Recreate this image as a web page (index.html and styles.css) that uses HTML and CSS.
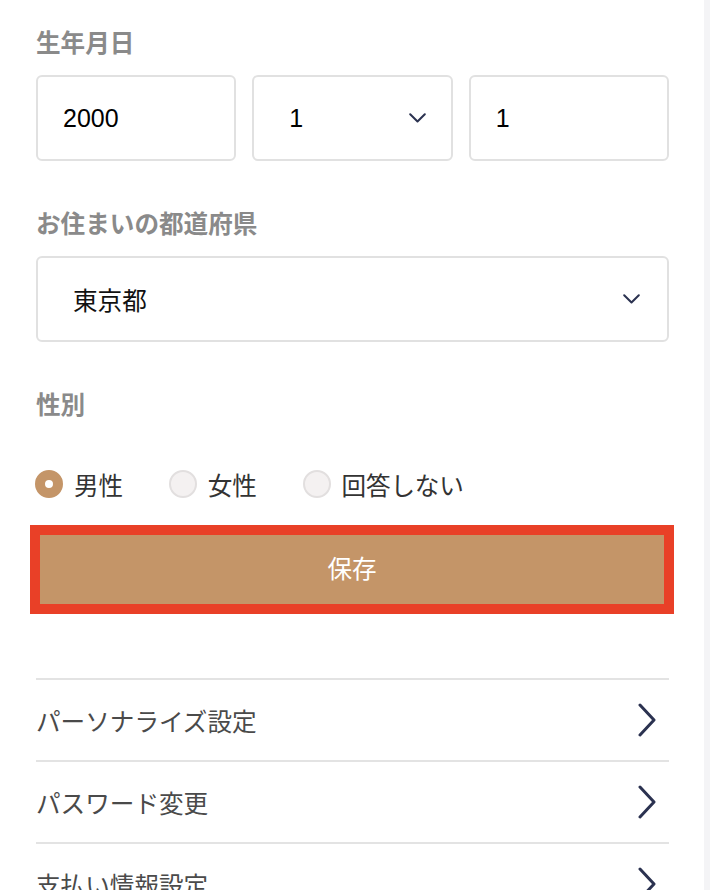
FILE: index.html
```html
<!DOCTYPE html>
<html lang="ja">
<head>
<meta charset="utf-8">
<title>プロフィール設定</title>
<link rel="stylesheet" href="styles.css">
</head>
<body>
<div class="page">
  <main class="content">
    <section class="group first">
      <div class="label">生年月日</div>
      <div class="date-row">
        <div class="field field-input"><span class="num">2000</span></div>
        <div class="field field-select month">
          <span class="num">1</span>
          <svg class="caret" width="17" height="10" viewBox="0 0 17 10"><path d="M1.2 1.2 L8.5 8.5 L15.8 1.2" fill="none" stroke="#2b3250" stroke-width="2" stroke-linecap="round" stroke-linejoin="round"/></svg>
        </div>
        <div class="field field-input"><span class="num">1</span></div>
      </div>
    </section>

    <section class="group">
      <div class="label">お住まいの都道府県</div>
      <div class="field field-select pref">
        <span class="val">東京都</span>
        <svg class="caret" width="17" height="10" viewBox="0 0 17 10"><path d="M1.2 1.2 L8.5 8.5 L15.8 1.2" fill="none" stroke="#2b3250" stroke-width="2" stroke-linecap="round" stroke-linejoin="round"/></svg>
      </div>
    </section>

    <section class="group">
      <div class="label">性別</div>
      <div class="radios">
        <div class="radio"><span class="dot checked"></span><span class="rtext">男性</span></div>
        <div class="radio"><span class="dot"></span><span class="rtext">女性</span></div>
        <div class="radio"><span class="dot"></span><span class="rtext">回答しない</span></div>
      </div>
    </section>

    <button class="save" type="button">保存</button>

    <ul class="menu">
      <li class="item"><span>パーソナライズ設定</span><svg class="chev" width="18" height="34" viewBox="0 0 18 34"><path d="M2 2 L16 17 L2 32" fill="none" stroke="#2b3250" stroke-width="3" stroke-linecap="round" stroke-linejoin="round"/></svg></li>
      <li class="item"><span>パスワード変更</span><svg class="chev" width="18" height="34" viewBox="0 0 18 34"><path d="M2 2 L16 17 L2 32" fill="none" stroke="#2b3250" stroke-width="3" stroke-linecap="round" stroke-linejoin="round"/></svg></li>
      <li class="item"><span>支払い情報設定</span><svg class="chev" width="18" height="34" viewBox="0 0 18 34"><path d="M2 2 L16 17 L2 32" fill="none" stroke="#2b3250" stroke-width="3" stroke-linecap="round" stroke-linejoin="round"/></svg></li>
    </ul>
  </main>
  <div class="rail"></div>
</div>
</body>
</html>
```

FILE: styles.css
```css
html, body {
  margin: 0;
  padding: 0;
  overflow: hidden;
  background: #ffffff;
}

body {
  font-family: "Noto Sans CJK JP", "Noto Sans", sans-serif;
  font-size: 24.6px;
  color: #333333;
}

.page {
  display: flex;
  min-height: 890px;
}

.content {
  flex: 1;
  padding: 0 35px 0 36px;
}

.rail {
  width: 6px;
  background: #f4f4f6;
}

.group {
  margin-top: 44px;
}

.group.first {
  margin-top: 24px;
}

.label {
  font-weight: 700;
  color: #8a8a8a;
  line-height: 34px;
  height: 34px;
  margin-bottom: 17px;
}

.date-row {
  display: grid;
  grid-template-columns: 1fr 1fr 1fr;
  gap: 16px;
}

.field {
  box-sizing: border-box;
  height: 86px;
  border: 2px solid #e1e1e1;
  border-radius: 6px;
  display: flex;
  align-items: center;
  background: #ffffff;
}

.field-input {
  padding-left: 25px;
}

.field-select {
  justify-content: space-between;
  padding-left: 35px;
  padding-right: 25px;
}

.field-select.pref {
  padding-right: 27px;
}

.num {
  font-family: "Liberation Sans", Arial, sans-serif;
  font-size: 25px;
  color: #000000;
}

.val {
  color: #111111;
}

.caret {
  display: block;
  flex: none;
}

.radios {
  display: flex;
  align-items: center;
  gap: 47px;
  margin-top: 50px;
  height: 28px;
}

.radio {
  display: flex;
  align-items: center;
  gap: 11px;
}

.dot {
  box-sizing: border-box;
  width: 28px;
  height: 28px;
  margin-left: -1px;
  border-radius: 50%;
  background: #f4f1f1;
  border: 2px solid #e2dfdf;
  flex: none;
}

.dot.checked {
  background: #ffffff;
  border: 10px solid #c49568;
}

.rtext {
  color: #333333;
  line-height: 28px;
  letter-spacing: -0.2px;
}

.save {
  display: block;
  box-sizing: border-box;
  width: calc(100% + 11px);
  margin: 27px -5px 0 -6px;
  height: 89px;
  border: 10px solid #e94027;
  background: #c49568;
  color: #ffffff;
  font-family: "Noto Sans CJK JP", "Noto Sans", sans-serif;
  font-size: 24.6px;
  padding: 0 0 5px 0;
  cursor: pointer;
}

.menu {
  list-style: none;
  margin: 64px 0 0 0;
  padding: 0;
}

.item {
  box-sizing: border-box;
  height: 82px;
  border-top: 2px solid #e3e3e3;
  display: flex;
  align-items: center;
  justify-content: space-between;
  padding-right: 13px;
  color: #4a4a4a;
}

.chev {
  display: block;
  flex: none;
}
```
